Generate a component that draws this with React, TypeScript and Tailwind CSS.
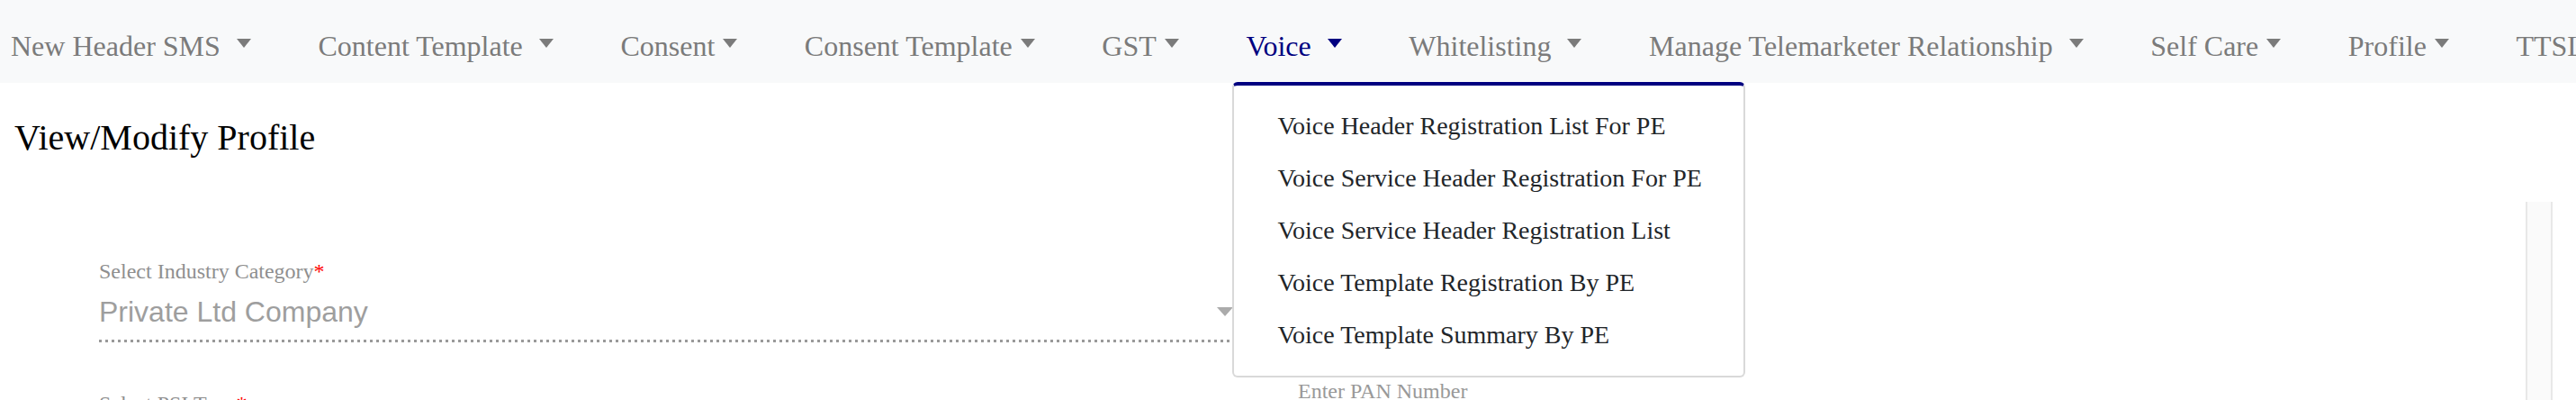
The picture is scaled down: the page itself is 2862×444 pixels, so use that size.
import React from "react";

type NavItem = { label: string; spaced?: boolean; active?: boolean };

// Menú principal: "spaced" = el texto lleva un espacio antes del triángulo
const navItems: NavItem[] = [
  { label: "New Header SMS", spaced: true },
  { label: "Content Template", spaced: true },
  { label: "Consent" },
  { label: "Consent Template" },
  { label: "GST" },
  { label: "Voice", spaced: true, active: true },
  { label: "Whitelisting", spaced: true },
  { label: "Manage Telemarketer Relationship", spaced: true },
  { label: "Self Care" },
  { label: "Profile" },
  { label: "TTSL" },
];

const voiceMenu = [
  "Voice Header Registration List For PE",
  "Voice Service Header Registration For PE",
  "Voice Service Header Registration List",
  "Voice Template Registration By PE",
  "Voice Template Summary By PE",
];

function Caret({ active, spaced }: { active?: boolean; spaced?: boolean }) {
  return (
    <span
      className={`inline-block h-0 w-0 -mt-[6px] border-x-[8px] border-t-[10px] border-x-transparent ${
        spaced ? "ml-[18px]" : "ml-[9px]"
      } ${active ? "border-t-[#000080]" : "border-t-[#7b7b7b]"}`}
    />
  );
}

function VoiceDropdown() {
  return (
    <div className="absolute left-[-15px] top-[64px] z-10 w-[570px] rounded-[6px] border-x-2 border-b-2 border-t-4 border-[#d9d9d9] border-t-[#000080] bg-white py-[16px]">
      {voiceMenu.map((item) => (
        <div key={item} className="px-[48px] py-[8px] text-[28px] leading-[42px] text-[#212529] whitespace-nowrap">
          {item}
        </div>
      ))}
    </div>
  );
}

export default function App() {
  return (
    <div className="relative h-[444px] w-[2862px] overflow-hidden bg-white font-['Liberation_Serif','Times_New_Roman',serif]">
      {/* Barra de navegación */}
      <nav className="flex h-[92px] items-center gap-[74.6px] overflow-visible bg-[#f8f9fa] pl-[12px] pt-[10px] whitespace-nowrap">
        {navItems.map((item) => (
          <div
            key={item.label}
            className={`relative flex shrink-0 items-center text-[32px] leading-[48px] ${
              item.active ? "text-[#000080]" : "text-[#7b7b7b]"
            }`}
          >
            <span>{item.label}</span>
            <Caret active={item.active} spaced={item.spaced} />
            {item.active && <VoiceDropdown />}
          </div>
        ))}
      </nav>

      <h1 className="pl-[16px] pt-[37px] text-[40px] leading-[48px] text-black">View/Modify Profile</h1>

      {/* Formulario con barra de desplazamiento */}
      <div className="mt-[47px] flex h-[300px] pl-[80px] pr-[26px]">
        <div className="grid flex-1 grid-cols-[1332px_1fr] pt-[59px]">
          <div className="px-[30px]">
            <label className="block text-[24px] leading-[36px] text-[#8f8f8f]">
              Select Industry Category<span className="text-[#ff0000]">*</span>
            </label>
            <div className="mt-[3px] flex items-center pb-[7px] pr-[12px]">
              <span className="flex-1 font-['Liberation_Sans',Arial,sans-serif] text-[32px] leading-[48px] text-[#9e9e9e]">
                Private Ltd Company
              </span>
              <span className="inline-block h-0 w-0 border-x-[9px] border-t-[10px] border-x-transparent border-t-[#ababab]" />
            </div>
            <div className="h-[3px] bg-[linear-gradient(to_right,#9a9a9a_3px,transparent_3px)] bg-[length:7px_3px] bg-repeat-x" />
            <label className="mt-[50px] block text-[24px] leading-[36px] text-[#8f8f8f]">
              Select PSI Type<span className="text-[#ff0000]">*</span>
            </label>
          </div>
          <div className="px-[30px] pt-[133px]">
            <label className="block text-[24px] leading-[36px] text-[#999999]">Enter PAN Number</label>
          </div>
        </div>
        <div className="w-[30px] shrink-0 border-x-2 border-[#e8e8e8] bg-[#fafafa]" />
      </div>
    </div>
  );
}
